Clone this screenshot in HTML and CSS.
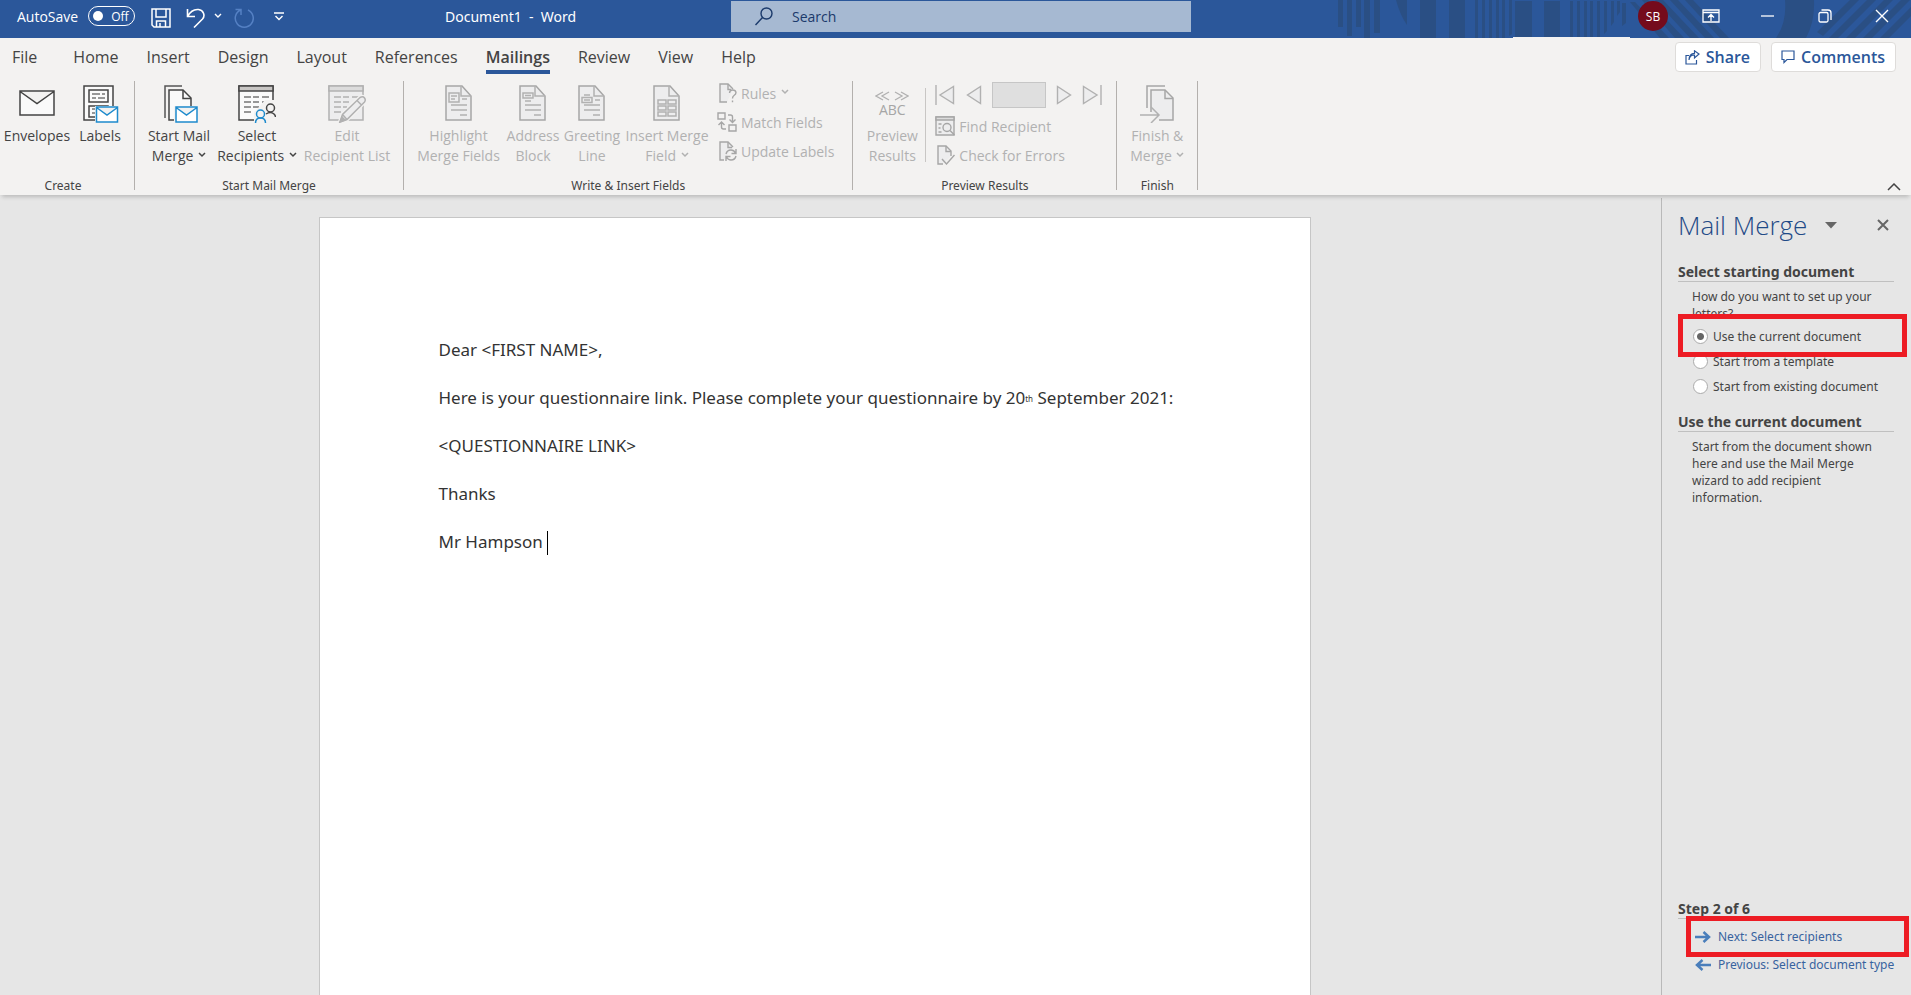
FILE: index.html
```html
<!DOCTYPE html>
<html lang="en">
<head>
<meta charset="utf-8">
<title>Document1 - Word</title>
<link rel="stylesheet" href="styles.css">
</head>
<body>
<header class="titlebar">
  <svg class="titlebar-art" width="581" height="38" viewBox="0 0 581 38" aria-hidden="true">
    <g fill="#2a4f84">
      <path d="M8 0h5v27H8zM17 0h5v36h-5zM26 0h5v27h-5zM34 0h6v38h-6zM44 0h6v33h-6zM66 0h11v25Q70 15 66 0zM90 0h16v38H90zM119 0h16v38h-16z"/>
      <path d="M145 0h3v38h-3zM152 0h3v38h-3zM159 0h3v38h-3zM166 0h3v38h-3zM172 0h3v38h-3zM179 0h3v34l-3 2zM185 1h17v36h-17zM214 1h16v36h-16z"/>
      <path d="M240 1h3v36h-3zM247 1h3v36h-3zM254 1h3v36h-3zM260 1h3v36h-3zM267 1h3v36h-3zM274 1h3v30l-3 3zM281 1h3v21l-3 4zM287 1h3v11l-3 4zM292 3h4v20l-4 3z"/>
      <path d="M325 0h8l36 38h-9zM340 0h8l36 38h-9zM355 0h8l36 38h-9zM312 0h6l36 38h-9zM300 2h5l34 36h-9z"/>
      <path d="M455 0h29q1 22-8 38h-30q11-16 9-38z"/>
      <path d="M520 0h9l-36 36-6-4zM537 0h9l-38 38h-9zM554 0h9l-38 38h-9zM571 0h9l-38 38h-9zM581 7v9l-22 22h-9z"/>
    </g>
    <path d="M183 37h117v1H183z" fill="#f3f2f1"/>
  </svg>
  <div class="quick-access">
    <label class="autosave">AutoSave
      <button class="toggle" type="button" role="switch" aria-checked="false"><span class="knob"></span>Off</button>
    </label>
    <button class="tool" type="button" aria-label="Save">
      <svg width="20" height="20" viewBox="0 0 20 20" fill="none" stroke="#fff" stroke-width="1.5"><path d="M1 1h18v18H3l-2-2zM5 1v8h10V1M5.500 19v-6h9v6M9 15v4"/></svg>
    </button>
    <button class="tool" type="button" aria-label="Undo">
      <svg width="20" height="20" viewBox="0 0 20 20" fill="none" stroke="#fff" stroke-width="1.6"><path d="M1.500 1v7.500H9M1.500 8.500C4 4 8 1 12.500 1.500c5 .7 7 6 4 9.500L8 19.500"/></svg>
    </button>
    <button class="tool tool-narrow" type="button" aria-label="Undo options">
      <svg width="8" height="6" viewBox="0 0 8 6" fill="none" stroke="#fff" stroke-width="1.4"><path d="M1 1l3 3 3-3"/></svg>
    </button>
    <button class="tool" type="button" aria-label="Repeat" disabled>
      <svg width="20" height="20" viewBox="0 0 20 20" fill="none" stroke="#5581c4" stroke-width="1.5"><path d="M1.500 1.500h5.500v5.500M6.500 2A9 9 0 1 0 14 2"/></svg>
    </button>
    <button class="tool tool-last" type="button" aria-label="Customize Quick Access Toolbar">
      <svg width="10" height="9" viewBox="0 0 10 9" fill="none" stroke="#fff" stroke-width="1.4"><path d="M0 1h10M1.500 4l3.500 3.500L8.500 4"/></svg>
    </button>
  </div>
  <div class="doc-title">Document1&nbsp; -&nbsp; Word</div>
  <label class="search">
    <svg width="18" height="19" viewBox="0 0 18 19" fill="none" stroke="#1b3a6b" stroke-width="1.4"><circle cx="11.500" cy="6.500" r="5.500"/><path d="M7.500 10.500L.5 18"/></svg>
    <input type="text" placeholder="Search" aria-label="Search">
  </label>
  <div class="window-tools">
    <button class="avatar" type="button">SB</button>
    <button class="win" type="button" aria-label="Ribbon display options">
      <svg width="18" height="14" viewBox="0 0 18 14" fill="none" stroke="#fff" stroke-width="1.3"><path d="M1 1h16v12H1zM1 3.500h16M9 12V6M6 8.500l3-3 3 3"/></svg>
    </button>
    <button class="win" type="button" aria-label="Minimize">
      <svg width="13" height="3" viewBox="0 0 13 3" stroke="#fff" stroke-width="1.3"><path d="M0 1h13"/></svg>
    </button>
    <button class="win" type="button" aria-label="Restore">
      <svg width="14" height="14" viewBox="0 0 14 14" fill="none" stroke="#fff" stroke-width="1.3"><rect x="1" y="3.500" width="9" height="9.500" rx="1.500"/><path d="M3.500 1H10q3 0 3 3v7"/></svg>
    </button>
    <button class="win" type="button" aria-label="Close">
      <svg width="14" height="14" viewBox="0 0 14 14" stroke="#fff" stroke-width="1.4"><path d="M1 1l12 12M13 1L1 13"/></svg>
    </button>
  </div>
</header>

<nav class="tabs">
  <div class="tab-list">
    <button class="tab tab-file" type="button">File</button>
    <button class="tab" type="button">Home</button>
    <button class="tab" type="button">Insert</button>
    <button class="tab" type="button">Design</button>
    <button class="tab" type="button">Layout</button>
    <button class="tab" type="button">References</button>
    <button class="tab tab-active" type="button">Mailings</button>
    <button class="tab" type="button">Review</button>
    <button class="tab" type="button">View</button>
    <button class="tab" type="button">Help</button>
  </div>
  <div class="share-tools">
    <button class="share-btn" type="button">
      <svg width="15" height="15" viewBox="0 0 15 15" fill="none" stroke="#2b579a" stroke-width="1.2"><path d="M4 5.500H1v8.500h10.500v-4M4 10c.5-3.500 2.500-5 5.500-5V8L14 4 9.500.8v2.500C6 3.500 4 6 4 10z"/></svg>
      Share
    </button>
    <button class="share-btn" type="button">
      <svg width="14" height="14" viewBox="0 0 14 14" fill="none" stroke="#2b579a" stroke-width="1.2"><path d="M1 1h12v8.500H6L3 12.500v-3H1z"/></svg>
      Comments
    </button>
  </div>
</nav>

<section class="ribbon" aria-label="Mailings">
  <div class="group">
    <div class="commands">
      <button class="big w-envelopes" type="button">
        <svg width="38" height="38" viewBox="0 0 38 38" fill="#fafafa" stroke="#444" stroke-width="1.5"><path d="M2 6h34v24H2zM2 6.500l17 12 17-12"/></svg>
        <span>Envelopes</span>
      </button>
      <button class="big w-labels" type="button">
        <svg width="38" height="38" viewBox="0 0 38 38" fill="none" stroke-width="1.5"><path d="M3 1h29v34H3z" fill="#fafafa" stroke="#444"/><path d="M8 5h19v12H8zM8 21h19v11H8z" stroke="#444"/><path d="M11 9h8m2 0h3M11 13h4m2 0h7M11 24h3M11 28h3" stroke="#777"/><path d="M14 21h24v17H14z" fill="#f3f2f1"/><path d="M15.500 22h21v15h-21zM15.500 22.500L26 30l10.500-7.500" fill="#fff" stroke="#1e8bcd"/></svg>
        <span>Labels</span>
      </button>
    </div>
    <div class="group-name">Create</div>
  </div>

  <div class="group">
    <div class="commands">
      <button class="big w-start" type="button">
        <svg width="38" height="38" viewBox="0 0 38 38" fill="none" stroke-width="1.5"><path d="M5 33V1h17" stroke="#555"/><path d="M9 35V5h14l8 8v22z" fill="#fafafa" stroke="#444"/><path d="M23 5v8.500h8" stroke="#444"/><path d="M14 21h25v17H14z" fill="#f3f2f1"/><path d="M16 22h21v15H16zM16 22.500L26.500 30 37 22.500" fill="#fff" stroke="#1e8bcd"/></svg>
        <span>Start Mail<br>Merge <svg class="chev" width="8" height="6" viewBox="0 0 8 6"><path d="M1 1l3 3 3-3"/></svg></span>
      </button>
      <button class="big w-select" type="button">
        <svg width="38" height="38" viewBox="0 0 38 38" fill="none" stroke-width="1.5"><path d="M1 1h34v34H1z" fill="#fafafa" stroke="#444"/><path d="M1 1h34v5H1z" fill="#c8c6c4" stroke="#444"/><path d="M6 12h7m2 0h6m3 0h7M6 17h7m2 0h6m3 0h4M6 22h7m2 0h6M6 27h7" stroke="#777"/><path d="M16 27l6-6 5-6h11v23H16z" fill="#f3f2f1"/><circle cx="32.500" cy="23" r="4" stroke="#444"/><path d="M28 29q4.500-3 8 0 1.500 1.500 1.500 3" stroke="#444"/><circle cx="22.500" cy="29" r="4" stroke="#1e8bcd"/><path d="M17.500 38q0-5 5-5t5 5" stroke="#1e8bcd"/></svg>
        <span>Select<br>Recipients <svg class="chev" width="8" height="6" viewBox="0 0 8 6"><path d="M1 1l3 3 3-3"/></svg></span>
      </button>
      <button class="big w-edit" type="button" disabled>
        <svg width="38" height="38" viewBox="0 0 38 38" fill="none" stroke="#b1b1b1" stroke-width="1.5"><path d="M1 1h34v34H1z" fill="#ededee"/><path d="M1 1h34v5H1z" fill="#dcdcdc"/><path d="M6 12h7m2 0h6m3 0h7M6 17h7m2 0h6M6 22h7m2 0h4M6 27h7"/><path d="M12 37l2.500-7.500L32 12.500q3-1.500 4.500.5 1.500 2 0 4L19 34.500z" fill="#ededee" stroke="#f3f2f1" stroke-width="4"/><path d="M12 37l2.500-7.500L32 12.500q3-1.500 4.500.5 1.500 2 0 4L19 34.500zM14.500 29.500l4.500 5M29 15.500l4.500 4.500" fill="#ededee"/><path d="M12 37l2-5 3 3z" fill="#b1b1b1"/></svg>
        <span>Edit<br>Recipient List</span>
      </button>
    </div>
    <div class="group-name">Start Mail Merge</div>
  </div>

  <div class="group">
    <div class="commands">
      <button class="big w-highlight" type="button" disabled>
        <svg width="38" height="38" viewBox="0 0 38 38" fill="none" stroke="#b1b1b1" stroke-width="1.5"><path d="M6 1h16l9 10v24H6z" fill="#ededee" stroke="#a6a6a6"/><path d="M21 1v10h10M9 8h10v9H9zM11 11h6m-6 3h4M22 14h5M11 20h16M11 25h16M20 30h7"/></svg>
        <span>Highlight<br>Merge Fields</span>
      </button>
      <button class="big w-address" type="button" disabled>
        <svg width="38" height="38" viewBox="0 0 38 38" fill="none" stroke="#b1b1b1" stroke-width="1.500"><path d="M6 1h16l9 10v24H6z" fill="#ededee" stroke="#a6a6a6"/><path d="M21 1v10h10M9 8h10v5H9zM11 10.500h6M11 16h6M11 20h16M11 25h16M20 30h7"/></svg>
        <span>Address<br>Block</span>
      </button>
      <button class="big w-greeting" type="button" disabled>
        <svg width="38" height="38" viewBox="0 0 38 38" fill="none" stroke="#b1b1b1" stroke-width="1.500"><path d="M6 1h16l9 10v24H6z" fill="#ededee" stroke="#a6a6a6"/><path d="M21 1v10h10M11 10h6M9 12.500h10v5H9zM11 15h6M22 15h5M11 20h16M11 25h16M20 30h7"/></svg>
        <span>Greeting<br>Line</span>
      </button>
      <button class="big w-insert" type="button" disabled>
        <svg width="38" height="38" viewBox="0 0 38 38" fill="none" stroke="#b1b1b1" stroke-width="1.500"><path d="M6 1h16l9 10v24H6z" fill="#ededee" stroke="#a6a6a6"/><path d="M21 1v10h10M10 15h8v4h-8zM20 15h8v4h-8zM10 21h8v4h-8zM20 21h8v4h-8zM10 27h8v4h-8zM20 27h8v4h-8z"/></svg>
        <span>Insert Merge<br>Field <svg class="chev" width="8" height="6" viewBox="0 0 8 6"><path d="M1 1l3 3 3-3"/></svg></span>
      </button>
      <div class="stack">
        <button class="small" type="button" disabled>
          <svg width="20" height="20" viewBox="0 0 20 20" fill="none" stroke="#a6a6a6" stroke-width="1.4"><path d="M10 19H3V1h8l5 5" fill="#ededee"/><path d="M11 1v5.500h3M12.500 10q.3-3 3.200-3t3.300 2.500q0 1.800-2 3-1.500 1-1.500 3M15.500 17.500v1.800"/></svg>
          Rules <svg class="chev" width="8" height="6" viewBox="0 0 8 6"><path d="M1 1l3 3 3-3"/></svg>
        </button>
        <button class="small" type="button" disabled>
          <svg width="20" height="20" viewBox="0 0 20 20" fill="none" stroke="#a6a6a6" stroke-width="1.400"><path d="M1 1h7v6H1zM12 13h7v6h-7z"/><path d="M11 3h2.500q2 0 2 2v5M12.500 7.500l3 3 3-3M9 17H6.500q-2 0-2-2v-4M1.500 13l3-3 3 3"/></svg>
          Match Fields
        </button>
        <button class="small" type="button" disabled>
          <svg width="20" height="20" viewBox="0 0 20 20" fill="none" stroke="#a6a6a6" stroke-width="1.400"><path d="M7 19H3V1h8l5 5" fill="#ededee"/><path d="M11 1v5.500h4M9 13q1-4 5-4 3 0 4.500 3M19 8v4.500h-4.500M19 15q-1 4-5 4-3 0-4.500-3M9 20v-4.500h4.500"/></svg>
          Update Labels
        </button>
      </div>
    </div>
    <div class="group-name">Write &amp; Insert Fields</div>
  </div>

  <div class="group">
    <div class="commands">
      <button class="big w-preview" type="button" disabled>
        <span class="preview-mark">
          <svg width="34" height="10" viewBox="0 0 34 10" fill="none" stroke="#b1b1b1" stroke-width="1.3"><path d="M8 1L1 5l7 4M14 1L7 5l7 4M20 1l7 4-7 4M26 1l7 4-7 4"/></svg>
          <b>ABC</b>
        </span>
        <span>Preview<br>Results</span>
      </button>
      <div class="stack stack-divided">
        <div class="record-nav">
          <button type="button" aria-label="First record" disabled><svg width="20" height="20" viewBox="0 0 20 20" fill="#ededee" stroke="#b1b1b1" stroke-width="1.400"><path d="M1 0v20M18.500 1.500v17L5 10z"/></svg></button>
          <button class="previous" type="button" aria-label="Previous record" disabled><svg width="16" height="20" viewBox="0 0 16 20" fill="#ededee" stroke="#b1b1b1" stroke-width="1.400"><path d="M14.500 1.500v17L1.500 10z"/></svg></button>
          <input type="text" aria-label="Record" disabled>
          <button type="button" aria-label="Next record" disabled><svg width="16" height="20" viewBox="0 0 16 20" fill="#ededee" stroke="#b1b1b1" stroke-width="1.400"><path d="M1.500 1.500v17l13-8.500z"/></svg></button>
          <button type="button" aria-label="Last record" disabled><svg width="20" height="20" viewBox="0 0 20 20" fill="#ededee" stroke="#b1b1b1" stroke-width="1.400"><path d="M19 0v20M1.500 1.500v17L15 10z"/></svg></button>
        </div>
        <button class="small" type="button" disabled>
          <svg width="20" height="20" viewBox="0 0 20 20" fill="none" stroke="#a6a6a6" stroke-width="1.400"><path d="M1 1h18v18H1z" fill="#ededee"/><path d="M1 1h18v3H1z" fill="#dcdcdc"/><path d="M3.500 8h3M3.500 12h2M3.500 16h3"/><circle cx="12" cy="11.500" r="4"/><path d="M15 14.500l4.500 4.500"/></svg>
          Find Recipient
        </button>
        <button class="small" type="button" disabled>
          <svg width="20" height="20" viewBox="0 0 20 20" fill="none" stroke="#a6a6a6" stroke-width="1.400"><path d="M8 19H3V1h8l5 5v5" fill="#ededee"/><path d="M11 1v5.500h5M7 14l4.500 5L19.500 10"/></svg>
          Check for Errors
        </button>
      </div>
    </div>
    <div class="group-name">Preview Results</div>
  </div>

  <div class="group">
    <div class="commands">
      <button class="big w-finish" type="button" disabled>
        <svg width="38" height="38" viewBox="0 0 38 38" fill="none" stroke="#a6a6a6" stroke-width="1.500"><path d="M9 23V1h18"/><path d="M13 27V5h14l8 8v22H21" fill="#ededee"/><path d="M27 5v8.500h8"/><path d="M2 30h19M13 22l8 8-8 8" stroke="#b1b1b1"/></svg>
        <span>Finish &amp;<br>Merge <svg class="chev" width="8" height="6" viewBox="0 0 8 6"><path d="M1 1l3 3 3-3"/></svg></span>
      </button>
    </div>
    <div class="group-name">Finish</div>
  </div>
  <button class="collapse" type="button" aria-label="Collapse the ribbon">
    <svg width="14" height="8" viewBox="0 0 14 8" fill="none" stroke="#444" stroke-width="1.500"><path d="M1 7l6-6 6 6"/></svg>
  </button>
</section>

<main class="workspace">
  <div class="canvas">
    <article class="page">
      <p>Dear &lt;FIRST NAME&gt;,</p>
      <p>Here is your questionnaire link. Please complete your questionnaire by 20<span class="ordinal">th</span> September 2021:</p>
      <p>&lt;QUESTIONNAIRE LINK&gt;</p>
      <p>Thanks</p>
      <p>Mr Hampson <span class="caret"></span></p>
    </article>
  </div>
  <aside class="pane">
    <div class="pane-head">
      <h1>Mail Merge</h1>
      <button class="pane-menu" type="button" aria-label="Task pane options"><svg width="12" height="7" viewBox="0 0 12 7" fill="#666"><path d="M0 0h12L6 6.500z"/></svg></button>
      <button class="pane-close" type="button" aria-label="Close"><svg width="12" height="12" viewBox="0 0 12 12" stroke="#666" stroke-width="2"><path d="M1 1l10 10M11 1L1 11"/></svg></button>
    </div>
    <h2>Select starting document</h2>
    <p class="pane-text">How do you want to set up your letters?</p>
    <div class="options">
      <label class="option marked"><input type="radio" name="start" checked>Use the current document</label>
      <label class="option"><input type="radio" name="start">Start from a template</label>
      <label class="option"><input type="radio" name="start">Start from existing document</label>
    </div>
    <h2>Use the current document</h2>
    <p class="pane-text">Start from the document shown here and use the Mail Merge wizard to add recipient information.</p>
    <div class="steps">
      <h2>Step 2 of 6</h2>
      <a class="step marked" href="#next"><svg width="16" height="12" viewBox="0 0 16 12" fill="none" stroke="#4a7ebb" stroke-width="2.500"><path d="M0 6h14M8.500 1l5.500 5-5.500 5"/></svg>Next: Select recipients</a>
      <a class="step" href="#previous"><svg width="16" height="12" viewBox="0 0 16 12" fill="none" stroke="#4a7ebb" stroke-width="2.500"><path d="M16 6H2M7.500 1L2 6l5.500 5"/></svg>Previous: Select document type</a>
    </div>
  </aside>
</main>
</body>
</html>
```
FILE: styles.css
```css
* { box-sizing: border-box; }

html, body { height: 100%; }

body {
  margin: 0;
  display: flex;
  flex-direction: column;
  overflow: hidden;
  background: #e6e6e6;
  color: #444;
  font-family: "Open Sans", "Noto Sans", sans-serif;
  font-size: 14px;
}

button, input {
  margin: 0;
  padding: 0;
  border: 0;
  background: none;
  color: inherit;
  font: inherit;
}

svg { display: block; flex: none; }

/* Title bar */
.titlebar {
  position: relative;
  display: grid;
  grid-template-columns: 346fr 385fr 460fr 720fr;
  height: 38px;
  flex: none;
  padding-bottom: 6px;
  background: #2b579a;
  color: #fff;
}

.titlebar-art { position: absolute; top: 0; right: 0; }

.quick-access { display: flex; align-items: center; padding-left: 17px; }

.autosave { display: flex; align-items: center; gap: 10px; margin-right: 16px; }

.toggle {
  display: flex;
  align-items: center;
  gap: 8px;
  width: 47px;
  height: 20px;
  padding-left: 4px;
  border: 1px solid #fff;
  border-radius: 10px;
  font-size: 12px;
}

.knob { width: 10px; height: 10px; border-radius: 5px; background: #fff; }

.tool { margin-right: 15px; padding-top: 4px; }
.tool-narrow { margin: 0 12px 0 -7px; padding: 0; }
.tool-last { margin: 0 0 0 5px; padding: 0; }

.doc-title { display: flex; align-items: center; padding-left: 99px; font-family: "Noto Sans", sans-serif; }

.search {
  position: relative;
  display: flex;
  align-items: center;
  gap: 19px;
  height: 31px;
  margin-top: 1px;
  padding-left: 24px;
  background: #a6b9d2;
}

.search input { flex: 1; min-width: 0; color: #1b3a6b; }
.search input::placeholder { color: #1b3a6b; opacity: 1; }

.window-tools { position: relative; display: flex; align-items: center; justify-content: flex-end; padding-right: 1px; }

.avatar {
  width: 30px;
  height: 30px;
  margin-right: 14px;
  border-radius: 15px;
  background: #750b1c;
  font-size: 12px;
}

.win { display: flex; align-items: center; justify-content: center; width: 57px; height: 32px; }

/* Tabs */
.tabs {
  display: flex;
  flex: none;
  justify-content: space-between;
  height: 40px;
  padding: 0 15px 0 12px;
  background: #f3f2f1;
}

.tab-list { display: flex; align-items: flex-start; gap: 28px; font-size: 16px; }
.tab { height: 36px; padding-top: 5px; border-bottom: 4px solid transparent; }
.tab-file { margin-right: 8px; }
.tab-active { border-color: #2b579a; font-weight: 600; }

.share-tools { display: flex; gap: 10px; padding-top: 4px; }

.share-btn {
  display: flex;
  align-items: center;
  gap: 6px;
  height: 30px;
  padding: 0 10px 0 9px;
  border: 1px solid #dedcda;
  border-radius: 4px;
  background: #fff;
  color: #2b579a;
  font-size: 16px;
  font-weight: 600;
}

/* Ribbon */
.ribbon {
  position: relative;
  z-index: 1;
  display: flex;
  flex: none;
  height: 117px;
  padding: 3px 0 5px;
  background: #f3f2f1;
  box-shadow: 0 4px 4px -2px #00000030;
}

.group {
  display: flex;
  flex-direction: column;
  justify-content: space-between;
  padding: 0 8px;
  border-right: 1px solid #b3b0ad;
}

.group:first-child { padding-left: 0; }

.commands { display: flex; }

.big {
  display: flex;
  flex-direction: column;
  align-items: center;
  gap: 3px;
  padding-top: 4px;
  line-height: 20px;
  white-space: nowrap;
}

.w-envelopes { width: 74px; }
.w-labels { width: 52px; }
.w-start { width: 72px; }
.w-select { width: 84px; }
.w-edit { width: 96px; }
.w-highlight { width: 93px; }
.w-address { width: 56px; }
.w-greeting { width: 62px; }
.w-insert { width: 88px; }
.w-preview { width: 62px; }
.w-finish { width: 64px; }

button:disabled { color: #b1b1b1; }

.chev { display: inline-block; margin: 0 0 3px 1px; fill: none; stroke: currentColor; stroke-width: 1.5; }

.preview-mark {
  display: flex;
  flex-direction: column;
  align-items: center;
  height: 38px;
  padding-top: 6px;
  color: #a6a6a6;
}
.preview-mark b { font-weight: 400; line-height: 18px; }

.stack { display: flex; flex-direction: column; padding: 2px 10px 0 6px; gap: 9px; }

.small { display: flex; align-items: center; gap: 4px; height: 20px; white-space: nowrap; }

.stack-divided { margin-left: 2px; padding: 1px 6px 0 10px; gap: 7px; background: linear-gradient(#c8c6c4, #c8c6c4) 0 7px / 1px 74px no-repeat; }
.stack-divided .small { height: 22px; }

.record-nav { display: flex; align-items: center; gap: 10px; }
.record-nav input { width: 54px; height: 26px; border: 1px solid #c6c6c6; background: #dfdfdf; }
.record-nav .previous { margin-left: 1px; }

.group-name { text-align: center; font-family: "Noto Sans", sans-serif; font-size: 12px; line-height: 8px; color: #444; }

.collapse { position: absolute; right: 10px; bottom: 4px; }

/* Document area */
.workspace { display: flex; flex: 1; min-height: 0; }

.canvas { display: flex; flex: 1; justify-content: center; padding: 22px 32px 0 0; }

.page {
  width: 992px;
  max-width: 100%;
  padding: 120px 119px 0;
  border: 1px solid #c6c6c6;
  border-bottom: 0;
  background: #fff;
  color: #333;
  font-family: "Noto Sans", sans-serif;
  font-size: 17px;
  line-height: 24px;
}

.page p { margin: 0 0 24px; white-space: nowrap; }
.ordinal { font-size: 8px; line-height: 8px; vertical-align: 2px; }
.caret { display: inline-block; width: 1px; height: 24px; background: #000; vertical-align: middle; }

/* Task pane */
.pane {
  display: flex;
  flex-direction: column;
  width: 250px;
  margin-top: 3px;
  padding: 8px 17px 22px 16px;
  border-left: 1px solid #b9b9b9;
  font-family: "Noto Sans", sans-serif;
  font-size: 12px;
  line-height: 17px;
}

.pane-head { display: flex; align-items: center; height: 38px; margin-bottom: 19px; }
.pane-head h1 { margin: 0; color: #1f4a86; font-family: "Open Sans", sans-serif; font-size: 26px; font-weight: 300; }
.pane-menu { margin-left: 18px; }
.pane-close { margin: 0 5px 0 auto; }

.pane h2 { margin: 0; border-bottom: 1px solid #c0c0c0; font-size: 14px; line-height: 18px; }
.pane-text { margin: 6px 14px 0; }

.options { display: flex; flex-direction: column; gap: 8px; margin: 6px 0 18px 15px; }

.option { position: relative; display: flex; align-items: center; gap: 5px; height: 17px; white-space: nowrap; }

.option input {
  flex: none;
  width: 15px;
  height: 15px;
  margin: 0;
  appearance: none;
  border: 1px solid #ababab;
  border-radius: 8px;
  background: #fff;
}
.option input:checked { background: radial-gradient(circle, #666 3px, #fff 4px); }

.steps { margin-top: auto; }
.step { position: relative; display: flex; align-items: center; gap: 7px; height: 17px; margin: 11px 0 0 17px; color: #38639f; text-decoration: none; white-space: nowrap; }
.step.marked { margin-top: 9px; }

/* Red call-out frames drawn over the marked items */
.marked::after { content: ""; position: absolute; z-index: 2; border: 5px solid #ed1c24; }
.option.marked::after { inset: -14px -13px -12px -15px; }
.step.marked::after { inset: -12px -15px -12px -9px; }
.option.marked { z-index: 1; }
```
